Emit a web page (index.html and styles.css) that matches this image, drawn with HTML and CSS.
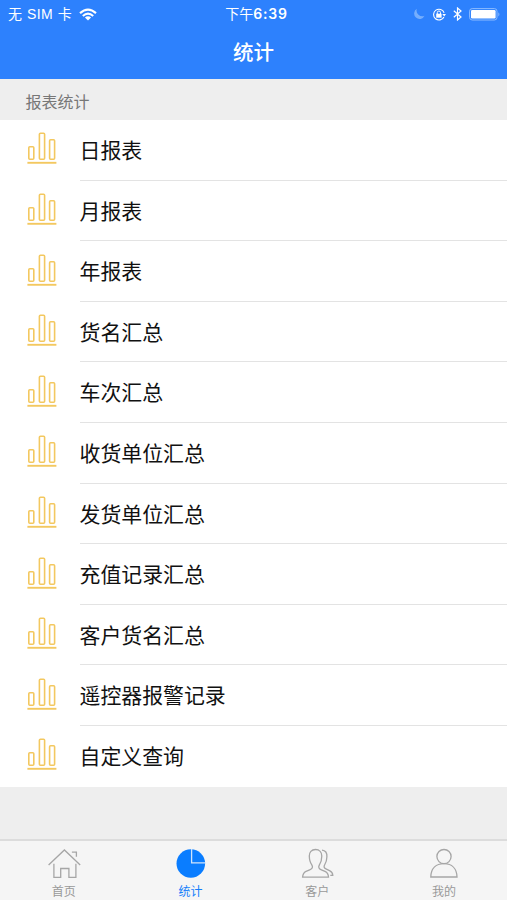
FILE: index.html
```html
<!DOCTYPE html>
<html lang="zh-CN">
<head>
    <meta charset="UTF-8">
    <meta name="viewport" content="width=device-width, initial-scale=1.0">
    <title>统计</title>
    <link rel="stylesheet" href="styles.css">
</head>
<body>
    <svg class="sprite">
        <symbol id="icon-bars" viewBox="0 0 30 33">
            <g fill="none" stroke="#f3c860" stroke-width="1.6">
                <rect x="1.8" y="14.7" width="5" height="12.6" rx="1"/>
                <rect x="12.4" y="1.3" width="5.2" height="26" rx="1"/>
                <rect x="22.6" y="7.8" width="5" height="19.5" rx="1"/>
                <path d="M0.4 30.8H29.4" stroke-width="1.9"/>
            </g>
        </symbol>
    </svg>

    <header>
        <div class="status-bar">
            <div class="carrier">
                <span>无 SIM 卡</span>
                <svg width="18" height="13" viewBox="0 0 18 13">
                    <g fill="none" stroke="#fff" stroke-width="2.1">
                        <path d="M1 5.1Q9-2 17 5.1"/>
                        <path d="M3.8 8Q9 3.4 14.2 8"/>
                    </g>
                    <path d="M5.9 9.5Q9 7 12.1 9.5L9 12.5Z" fill="#fff"/>
                </svg>
            </div>
            <div class="time">下午<b>6:39</b></div>
            <div class="indicators">
                <svg width="12" height="12" viewBox="0 0 11 11">
                    <path d="M3.5 .8A5 5 0 1 0 10.6 7.2A5.3 5.3 0 0 1 3.5 .8Z" fill="#75aefd"/>
                </svg>
                <svg class="lock" width="14" height="13" viewBox="0 0 14 13">
                    <path d="M11.9 8.9A5.4 5.4 0 1 1 12.1 4.8" fill="none" stroke="#fff" stroke-width="1.1"/>
                    <path d="M10.3 5.9H14L12.2 8.6Z" fill="#fff"/>
                    <rect x="4.2" y="5.7" width="5.4" height="4" fill="#fff"/>
                    <path d="M5.3 6V4.6a1.6 1.6 0 0 1 3.2 0V6" fill="none" stroke="#fff"/>
                </svg>
                <svg class="bluetooth" width="9" height="14" viewBox="0 0 9 14">
                    <path d="M.8 3.8L8 10L4.5 13V1L8 4L.8 10.2" fill="none" stroke="#fff" stroke-width="1.2"/>
                </svg>
                <svg class="battery" width="32" height="13" viewBox="0 0 32 13">
                    <rect x=".6" y=".6" width="27.4" height="11.4" rx="2.6" fill="none" stroke="#8dbcff"/>
                    <rect x="2" y="2" width="24.6" height="8.6" rx="1.3" fill="#fff"/>
                    <path d="M29.4 4.2q2 2.1 0 4.2z" fill="#8dbcff"/>
                </svg>
            </div>
        </div>
        <h1>统计</h1>
    </header>

    <main>
        <h2>报表统计</h2>
        <ul class="report-list">
            <li><svg><use href="#icon-bars"/></svg><span>日报表</span></li>
            <li><svg><use href="#icon-bars"/></svg><span>月报表</span></li>
            <li><svg><use href="#icon-bars"/></svg><span>年报表</span></li>
            <li><svg><use href="#icon-bars"/></svg><span>货名汇总</span></li>
            <li><svg><use href="#icon-bars"/></svg><span>车次汇总</span></li>
            <li><svg><use href="#icon-bars"/></svg><span>收货单位汇总</span></li>
            <li><svg><use href="#icon-bars"/></svg><span>发货单位汇总</span></li>
            <li><svg><use href="#icon-bars"/></svg><span>充值记录汇总</span></li>
            <li><svg><use href="#icon-bars"/></svg><span>客户货名汇总</span></li>
            <li><svg><use href="#icon-bars"/></svg><span>遥控器报警记录</span></li>
            <li><svg><use href="#icon-bars"/></svg><span>自定义查询</span></li>
        </ul>
    </main>

    <nav class="tab-bar">
        <a class="tab">
            <svg width="36" height="32" viewBox="0 0 36 32">
                <path d="M3.6 17L19.4 2L35.2 17M8.9 15.8V29.4H15.7V20.5H23.9V29.4H30.9V15.8M26.9 4.2H31.4V8.8"/>
            </svg>
            <span>首页</span>
        </a>
        <a class="tab active">
            <svg width="34" height="32" viewBox="0 0 34 32">
                <circle cx="17.8" cy="15.5" r="14.3"/>
                <path d="M18.6 1V14.8H32.3"/>
            </svg>
            <span>统计</span>
        </a>
        <a class="tab">
            <svg width="34" height="32" viewBox="0 0 34 32">
                <path d="M15.5 1.5C11.5 1.5 9.2 4.2 9.3 8C9.4 12 10 14.5 11.8 16.8C13.2 19 12.4 20.7 9.7 21.8L6 23.3C3.6 24.4 2.8 26 2.6 29.1H28.5C28.4 26 27.3 24.4 25 23.3L21.4 21.8C18.7 20.7 18.1 19 19.4 16.8C21.1 14.2 21.8 12 21.8 8C21.8 4.2 19.5 1.5 15.5 1.5Z"/>
                <path d="M22 2.2C25.8 2.5 27.1 5 26.9 8.8C26.8 12.3 26.2 14.5 24.8 16.5C23.5 18.7 23.9 20.1 26.4 21.2L29.5 22.6C31.8 23.7 32.8 25 32.8 27.4H30.3"/>
            </svg>
            <span>客户</span>
        </a>
        <a class="tab">
            <svg width="34" height="32" viewBox="0 0 34 32">
                <circle cx="17" cy="8.6" r="7.1"/>
                <path d="M3.8 29C4 20.3 9.3 15.7 17 15.7S29.8 20.3 30 29Z"/>
            </svg>
            <span>我的</span>
        </a>
    </nav>
</body>
</html>
```
FILE: styles.css
```css
* {
    box-sizing: border-box;
}

body {
    margin: 0;
    height: 900px;
    display: flex;
    flex-direction: column;
    overflow: hidden;
    background-color: #eee;
    font-family: "Liberation Sans", "Noto Sans CJK SC", sans-serif;
}

.sprite {
    display: none;
}

header {
    height: 79px;
    flex: none;
    background-color: #2d81fd;
    color: #fff;
}

.status-bar {
    height: 27px;
    display: grid;
    grid-template-columns: 1fr auto 1fr;
    align-items: center;
    padding: 0 6px 0 8px;
    font-size: 14px;
    line-height: 27px;
}

.carrier {
    display: flex;
    align-items: center;
    gap: 7px;
    letter-spacing: 0.5px;
}

.time {
    padding-left: 4px;
}

.time b {
    font-family: Inter, "Liberation Sans", sans-serif;
    font-weight: 600;
    letter-spacing: 0.8px;
}

.indicators {
    display: flex;
    align-items: center;
    justify-content: flex-end;
}

.lock {
    margin-left: 7px;
}

.bluetooth {
    margin-left: 7px;
}

.battery {
    margin-left: 7px;
}

h1 {
    margin: 0;
    font-size: 20.5px;
    font-weight: 500;
    line-height: 52px;
    text-align: center;
}

main {
    flex: 1;
}

h2 {
    margin: 0;
    height: 41px;
    padding: 1px 0 0 25.5px;
    font-size: 16px;
    font-weight: normal;
    line-height: 46px;
    color: #777;
}

.report-list {
    list-style: none;
    margin: 0;
    padding: 0;
    background-color: #fff;
}

.report-list li {
    display: flex;
    height: 60.6px;
    padding-left: 27px;
}

.report-list svg {
    width: 30px;
    height: 33px;
    margin-top: 12.4px;
}

.report-list span {
    flex: 1;
    margin-left: 22.5px;
    border-bottom: 1px solid #e3e3e3;
    font-size: 20.9px;
    line-height: 62px;
    color: #111;
}

.report-list li:last-child span {
    border-bottom: none;
}

.tab-bar {
    display: flex;
    flex: none;
    height: 61px;
    border-top: 2px solid #dcdcdc;
    background-color: #f5f5f5;
}

.tab {
    flex: 1;
    display: flex;
    flex-direction: column;
    align-items: center;
    padding-top: 7px;
    font-size: 12px;
    line-height: 24px;
    color: #999;
}

.tab svg {
    flex: none;
    fill: none;
    stroke: #a6a6a6;
    stroke-width: 1.3;
}

.tab span {
    padding-left: 1px;
}

.tab.active {
    color: #147efb;
}

.tab.active circle {
    fill: #0a7dff;
    stroke: none;
}

.tab.active path {
    stroke: #cfe4fc;
}
```
